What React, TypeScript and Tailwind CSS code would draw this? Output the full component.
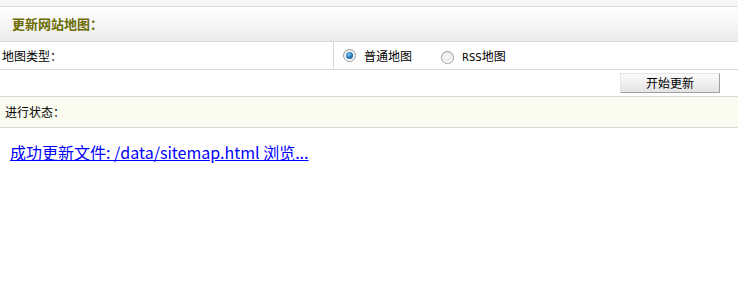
import React from "react";

function Radio({ checked }: { checked?: boolean }) {
  return (
    <span className="inline-flex items-center justify-center w-[13px] h-[13px] rounded-full border border-[#9a9a9a] bg-gradient-to-b from-[#e8e8e8] to-[#ffffff]">
      {checked ? (
        <span className="w-[7px] h-[7px] rounded-full bg-[radial-gradient(circle_at_40%_35%,#6fc2f5,#1a5f9e_70%,#0d3d6b)]" />
      ) : (
        <span className="w-[7px] h-[7px] rounded-full bg-[radial-gradient(circle_at_40%_35%,#ffffff,#d8d8d8)]" />
      )}
    </span>
  );
}

export default function App() {
  return (
    <div
      className="w-[738px] h-[295px] bg-white text-[12px] text-black"
      style={{ fontFamily: '"Noto Sans CJK SC", "Liberation Sans", sans-serif' }}
    >
      <div className="h-[7px] bg-[#f7f7f7] border-b border-[#dcdcdc]" />
      <div className="h-[35px] flex items-center pl-[12px] border-b border-[#d9d9d9] bg-gradient-to-b from-[#ffffff] to-[#ececec]">
        <span className="font-bold text-[#6b6b00] text-[13px]">更新网站地图：</span>
      </div>
      <div className="h-[28px] flex border-b border-[#d9d9d9]">
        <div className="w-[334px] border-r border-[#d9d9d9] flex items-center pl-[2px]">地图类型：</div>
        <div className="flex items-center pl-[9px]">
          <Radio checked />
          <span className="ml-[8px]">普通地图</span>
          <span className="ml-[29px]"><Radio /></span>
          <span className="ml-[8px]">
            <span className="text-[10px]" style={{ fontFamily: '"DejaVu Sans", sans-serif' }}>RSS</span>地图
          </span>
        </div>
      </div>
      <div className="h-[27px] flex items-center justify-end pr-[18px] border-b border-[#d9d9d9]">
        <button className="w-[100px] h-[20px] flex items-center justify-center text-[12px] border border-[#e4e4e4] border-r-[#a0a0a0] border-b-[#a0a0a0] bg-gradient-to-b from-[#fbfbfb] to-[#e4e4e4]">
          开始更新
        </button>
      </div>
      <div className="h-[31px] flex items-center pl-[5px] bg-[#f9fbef] border-b border-[#d9d9d9]">进行状态：</div>
      <div className="pl-[10px] pt-[12px]">
        <a href="#" className="text-[#0000ff] underline text-[16px] leading-[24px]">
          成功更新文件: /data/sitemap.html 浏览...
        </a>
      </div>
    </div>
  );
}
